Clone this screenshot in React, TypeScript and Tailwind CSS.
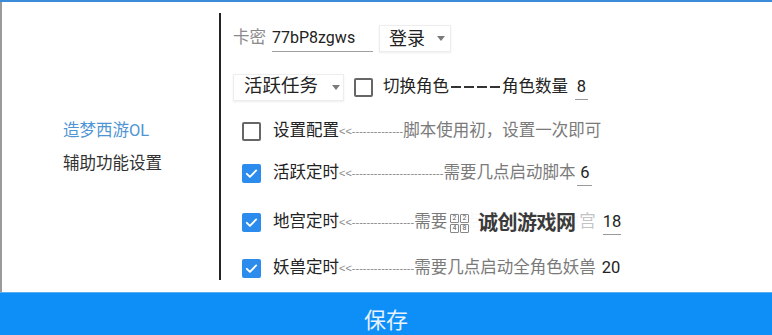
import React from "react";

const font = { fontFamily: 'Roboto, "Noto Sans CJK SC", "Noto Sans", sans-serif' };

function Arrow() {
  return <span className="w-0 h-0 border-x-[4px] border-x-transparent border-t-[5px] border-t-[#7a7a7a]" />;
}

function Check({ on }: { on?: boolean }) {
  if (on)
    return (
      <span className="w-[19px] h-[19px] rounded-[2px] bg-[#2b8cee] flex items-center justify-center shrink-0">
        <svg width="15" height="15" viewBox="0 0 24 24" fill="none" stroke="white" strokeWidth="3" strokeLinecap="round" strokeLinejoin="round">
          <path d="M4.5 12.5l5 5L19.5 7" />
        </svg>
      </span>
    );
  return <span className="block w-[19px] h-[19px] rounded-[2px] border-2 border-[#666] shrink-0 bg-white" />;
}

function Num({ v, w, line = true }: { v: string; w: string; line?: boolean }) {
  return (
    <span className={`relative inline-block text-center text-[#222] ${w}`}>
      {v}
      {line && <span className="absolute left-0 right-0 top-[24px] h-[1.5px] bg-[#9a9a9a]" />}
    </span>
  );
}

function Dashes({ n }: { n: number }) {
  return (
    <span className="text-[11px] text-[#8a8a8a] leading-none whitespace-nowrap" style={{ fontFamily: '"Liberation Sans", sans-serif' }}>
      {"<<" + "-".repeat(n)}
    </span>
  );
}

export default function App() {
  return (
    <div className="w-[772px] h-[335px] overflow-hidden bg-white flex flex-col relative" style={font}>
      <div className="h-[2px] bg-[#3b8cd8] shrink-0" />
      <div className="h-[278px] flex overflow-hidden border-l-2 border-l-[#9a9a9a] shrink-0">
        <div className="w-[217px] shrink-0 pl-[61px] pt-[112px] text-[16.5px] leading-[33px]">
          <div className="text-[#4f95d4]">造梦西游OL</div>
          <div className="text-[#333]">辅助功能设置</div>
        </div>
        <div className="w-[1.5px] bg-[#222] mt-[11px] shrink-0" />
        <div className="flex-1 pl-[12.5px] pt-[12px] flex flex-col text-[16.5px] text-[#222] whitespace-nowrap">
          {/* row 1 */}
          <div className="h-[48px] shrink-0 flex items-center">
            <span className="text-[#8a8a8a]">卡密</span>
            <span className="relative ml-[6px] w-[101px] h-[28px] flex items-center border-b-[1.5px] border-b-[#a0a0a0] text-[16px] pt-[1px] shrink-0">
              77bP8zgws
            </span>
            <span className="ml-[6px] w-[72px] h-[27px] shrink-0 flex items-center justify-between pl-[9px] pr-[5px] border border-[#ededed] shadow-[0_1px_2px_rgba(0,0,0,0.07)] text-[18px]">
              登录
              <Arrow />
            </span>
          </div>
          {/* row 2 */}
          <div className="h-[50px] shrink-0 flex items-center">
            <span className="w-[111px] h-[27px] shrink-0 flex items-center justify-between pl-[10px] pr-[3px] border border-[#ededed] shadow-[0_1px_2px_rgba(0,0,0,0.07)] text-[18.5px]">
              活跃任务
              <Arrow />
            </span>
            <span className="ml-[10px] shrink-0 flex">
              <Check />
            </span>
            <span className="ml-[10px]">切换角色</span>
            <span className="inline-flex gap-[3px] mx-[2px] shrink-0">
              <span className="w-[10px] h-[1.5px] bg-[#333]" />
              <span className="w-[10px] h-[1.5px] bg-[#333]" />
              <span className="w-[10px] h-[1.5px] bg-[#333]" />
              <span className="w-[10px] h-[1.5px] bg-[#333]" />
            </span>
            <span>角色数量</span>
            <span className="ml-[7px]">
              <Num v="8" w="w-[13px]" />
            </span>
          </div>
          {/* row 3 */}
          <div className="h-[38px] shrink-0 flex items-center pl-[9px]">
            <Check />
            <span className="ml-[12px]">设置配置</span>
            <Dashes n={14} />
            <span className="text-[#7a7a7a]">脚本使用初，设置一次即可</span>
          </div>
          {/* row 4 */}
          <div className="h-[46px] shrink-0 flex items-center pl-[9px]">
            <Check on />
            <span className="ml-[12px]">活跃定时</span>
            <Dashes n={25} />
            <span className="text-[#7a7a7a]">需要几点启动脚本</span>
            <span className="ml-[2px]">
              <Num v="6" w="w-[15px]" />
            </span>
          </div>
          {/* row 5 */}
          <div className="h-[52px] shrink-0 flex items-center pl-[9px]">
            <Check on />
            <span className="ml-[12px]">地宫定时</span>
            <Dashes n={17} />
            <span className="text-[#7a7a7a]">需要几点启动全角色地宫</span>
            <span className="ml-[7px]">
              <Num v="18" w="w-[18px]" />
            </span>
          </div>
          {/* row 6 */}
          <div className="h-[40px] shrink-0 flex items-center pl-[9px]">
            <Check on />
            <span className="ml-[12px]">妖兽定时</span>
            <Dashes n={17} />
            <span className="text-[#7a7a7a]">需要几点启动全角色妖兽</span>
            <span className="ml-[6px]">
              <Num v="20" w="w-[18px]" line={false} />
            </span>
          </div>
        </div>
      </div>
      <div className="h-[12px] shrink-0 border-l-2 border-l-[#9a9a9a]" />
      <div className="h-[56px] shrink-0 bg-[#0e8ff7] border-t border-t-[#5aaef2] flex items-center justify-center">
        <span className="text-[22px] text-[#e6f2ff]">保存</span>
      </div>

      {/* watermark overlay */}
      <div className="absolute left-[447px] top-[210px] h-[26px] flex items-stretch">
        <div className="w-[133px] bg-white/95 flex items-center">
          <span className="grid grid-cols-2 gap-[1px] ml-[3px]">
            <span className="w-[9px] h-[9px] border border-[#888] rounded-[1px] text-[7px] leading-[7px] text-center text-[#555]">2</span>
            <span className="w-[9px] h-[9px] border border-[#888] rounded-[1px] text-[7px] leading-[7px] text-center text-[#555]">2</span>
            <span className="w-[9px] h-[9px] border border-[#888] rounded-[1px] text-[7px] leading-[7px] text-center text-[#555]">4</span>
            <span className="w-[9px] h-[9px] border border-[#888] rounded-[1px] text-[7px] leading-[7px] text-center text-[#555]">8</span>
          </span>
          <span className="ml-[9px] text-[20px] font-bold text-[#3a3a3a] tracking-[-0.5px]">诚创游戏网</span>
        </div>
        <div className="w-[17px] bg-white/55" />
      </div>
    </div>
  );
}
